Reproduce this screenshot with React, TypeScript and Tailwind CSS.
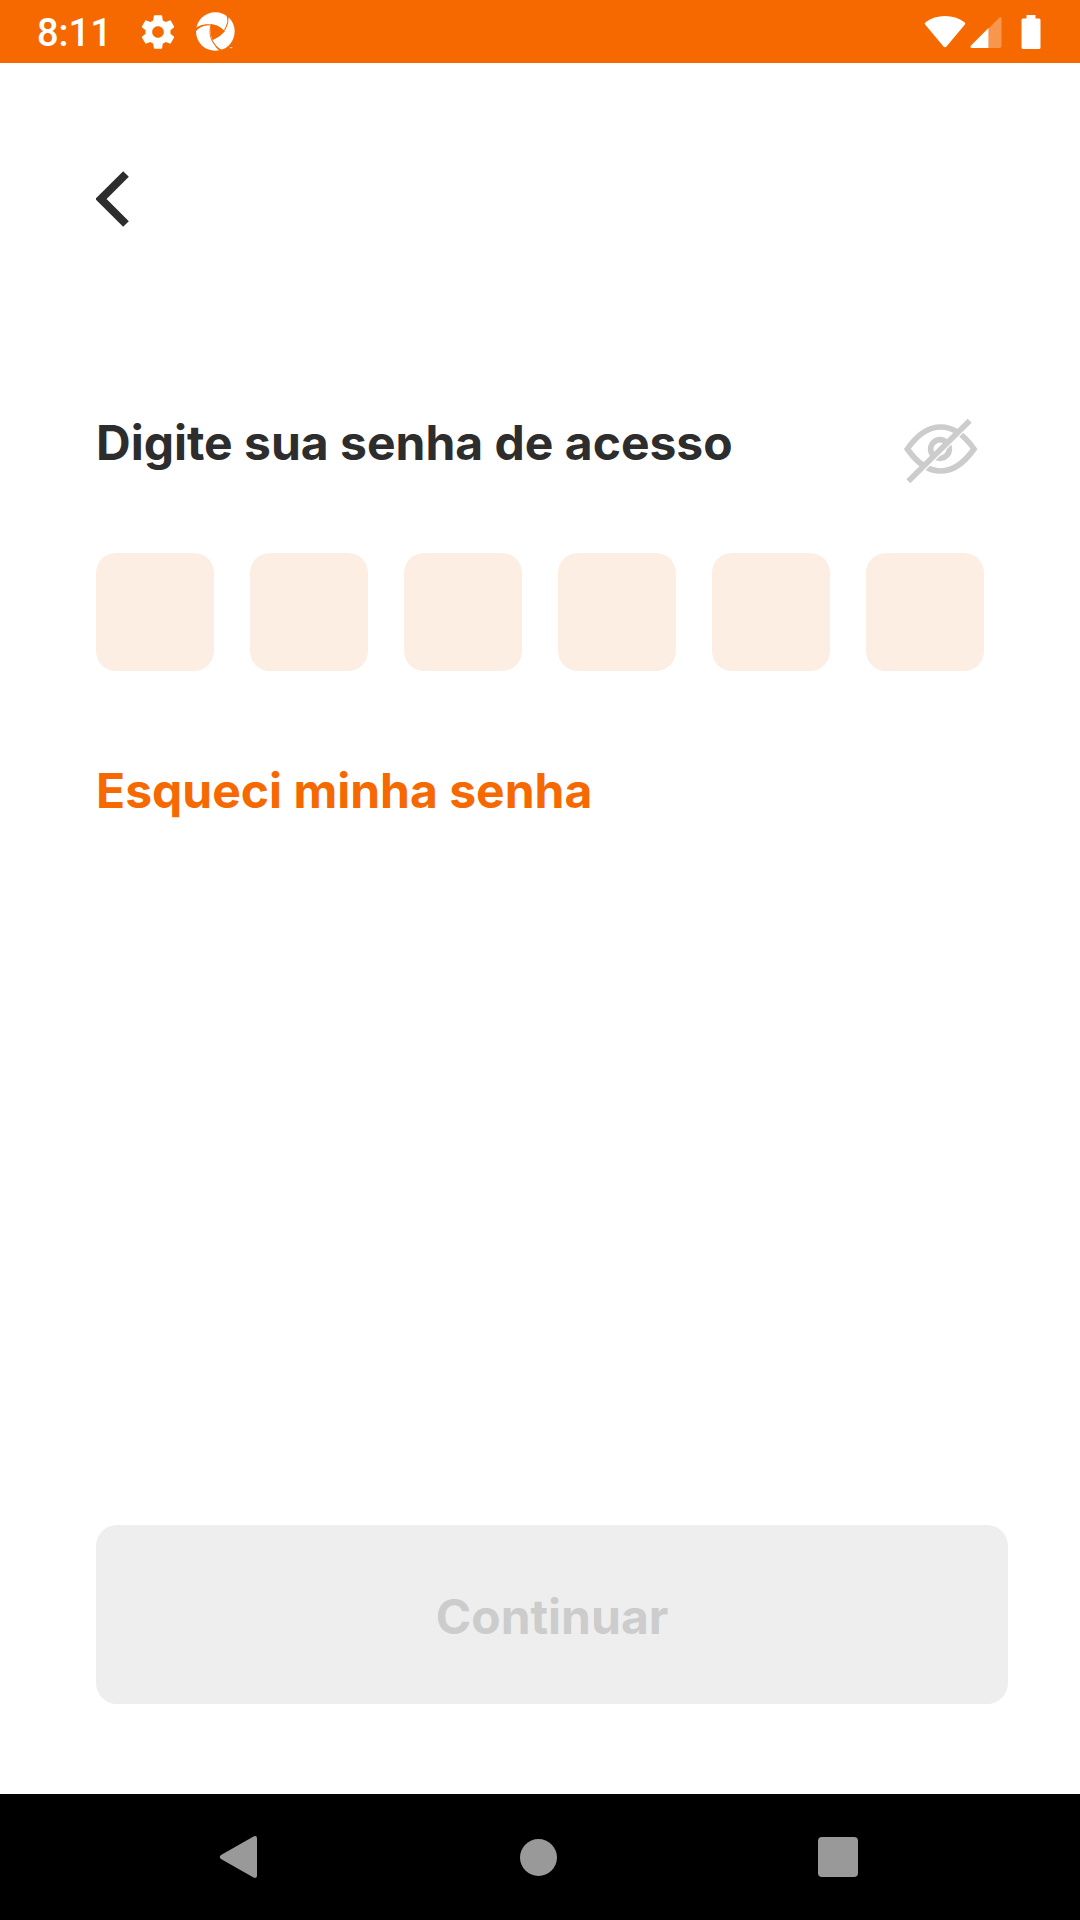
import { useState } from "react";

const digits = [1, 2, 3, 4, 5, 6];

function GearIcon() {
  return (
    <svg viewBox="0 0 24 24" className="size-10" fill="currentColor" aria-hidden="true">
      <path d="M19.43 12.98c.04-.32.07-.64.07-.98s-.03-.66-.07-.98l2.110-1.650c.19-.15.24-.42.12-.64l-2-3.460c-.12-.22-.39-.3-.61-.22l-2.490 1c-.52-.4-1.080-.73-1.690-.98l-.38-2.650C14.460 2.180 14.250 2 14 2h-4c-.25 0-.46.18-.49.42l-.38 2.650c-.61.25-1.170.59-1.690.98l-2.490-1c-.23-.09-.49 0-.61.22l-2 3.460c-.13.22-.07.49.12.64l2.110 1.650c-.04.32-.07.65-.07.98s.03.66.07.98l-2.110 1.650c-.19.15-.24.42-.12.64l2 3.460c.12.22.39.3.61.22l2.490-1c.52.4 1.080.73 1.690.98l.38 2.650c.03.24.24.42.49.42h4c.25 0 .46-.18.49-.42l.38-2.650c.61-.25 1.170-.59 1.690-.98l2.490 1c.23.09.49 0 .61-.22l2-3.460c.12-.22.07-.49-.12-.64l-2.110-1.650zM12 15.500c-1.930 0-3.500-1.570-3.500-3.500s1.570-3.500 3.500-3.500 3.500 1.570 3.500 3.500-1.570 3.500-3.500 3.500z" />
    </svg>
  );
}

function SwirlIcon() {
  return (
    <svg viewBox="0 0 117 117" className="size-[39px]" aria-hidden="true">
      <circle cx="58" cy="58.500" r="58" fill="#fff" />
      <g fill="none" stroke="#f66900" strokeWidth="3">
        <path d="M2 52C18 36 58 30 86 59" />
        <path d="M93 8C103 32 86 66 49 83" />
        <path d="M78 116C50 100 34 72 46 36" />
      </g>
      <path d="M0 47C12 38 30 35 46 37C26 38 10 46 0 58Z" fill="#f66900" />
      <path d="M90 8C97 22 96 40 85 59C92 42 94 26 98 14Z" fill="#f66900" />
      <path d="M80 117C66 108 56 98 49 83C54 100 62 110 73 117Z" fill="#f66900" />
      <path d="M46 37C62 38 76 46 85 59C76 69 64 78 49 83C43 68 42 52 46 37Z" fill="#f66900" />
      <path d="M101 107H109" stroke="#fff" strokeWidth="3" strokeOpacity="0.7" />
    </svg>
  );
}

function StatusBar() {
  return (
    <header className="flex h-[63px] items-center justify-between bg-[#f66900] pr-[39px] pl-[37px] text-white">
      <div className="flex items-center">
        <time className="pt-0.5 font-[Roboto,sans-serif] text-[38px] leading-[42px] font-medium">8:11</time>
        <span className="ml-[26px]">
          <GearIcon />
        </span>
        <span className="ml-[18px]">
          <SwirlIcon />
        </span>
      </div>
      <div className="flex items-center">
        <svg viewBox="0 0 42 34" className="h-[34px] w-[42px]" aria-hidden="true">
          <path
            d="M1.300 9.800Q0 8.500 1.500 7.300Q10 1 21 1T40.500 7.300Q42 8.500 40.700 9.800L22.500 31.500Q21 33 19.500 31.500Z"
            fill="currentColor"
          />
        </svg>
        <svg viewBox="0 0 32 34" className="ml-1 h-[34px] w-8" aria-hidden="true">
          <path d="M18.500 13.500L29.500 2.500Q31.500 1.500 31.500 3.500V31Q31.500 33 29.500 33H18.500Z" fill="#fff" fillOpacity="0.3" />
          <path d="M18.500 13V33H2Q-0.500 33 1 30.500Z" fill="currentColor" />
        </svg>
        <svg viewBox="0 0 20 34" className="ml-[19px] h-[34px] w-5" aria-hidden="true">
          <path d="M5.500 0H14.500V3.500H18Q19.500 3.500 19.500 5V32.500Q19.500 34 18 34H2Q0.500 34 0.500 32.500V5Q0.500 3.500 2 3.500H5.500Z" fill="currentColor" />
        </svg>
      </div>
    </header>
  );
}

function EyeOffIcon() {
  return (
    <svg viewBox="70 54 228 198" className="h-[66px] w-[76px]" fill="none" stroke="#ccc" strokeWidth="17" aria-hidden="true">
      <path d="M83 147C112 105 148 81 183 81S254 105 283 147C254 188 218 213 183 213S112 188 83 147Z" />
      <circle cx="181" cy="147" r="28" />
      <path d="M92 250L276 68" stroke="#fff" strokeWidth="8" />
      <path d="M86 244L270 62" />
    </svg>
  );
}

function NavBar() {
  return (
    <nav aria-label="Sistema" className="grid h-[126px] grid-cols-3 bg-black pr-[92px] pl-[90px] text-[#999]">
      <button type="button" aria-label="Voltar" className="flex items-center justify-center">
        <svg viewBox="0 0 42 44" className="h-11 w-[42px]" aria-hidden="true">
          <path d="M2 20L34.500 1.500Q38 0 38 3.500V40.500Q38 44 34.500 42.500L2 24Q-0.500 22 2 20Z" fill="currentColor" />
        </svg>
      </button>
      <button type="button" aria-label="Início" className="flex items-center justify-center">
        <span className="size-[37px] rounded-full bg-[#999]" />
      </button>
      <button type="button" aria-label="Recentes" className="flex items-center justify-center">
        <span className="size-10 rounded-[4px] bg-[#999]" />
      </button>
    </nav>
  );
}

export default function App() {
  const [visible, setVisible] = useState(false);
  return (
    <div className="flex min-h-screen flex-col bg-white font-[Inter,sans-serif] text-[#2d2d2d]">
      <StatusBar />
      <main className="flex grow flex-col pt-[108px] pr-[72px] pb-[90px] pl-24">
        <button type="button" aria-label="Voltar" className="w-fit">
          <svg viewBox="0 0 34 56" className="h-14 w-[34px]" aria-hidden="true">
            <path d="M30 3L5 28L30 53" fill="none" stroke="currentColor" strokeWidth="8" />
          </svg>
        </button>
        <form className="flex grow flex-col" onSubmit={(e) => e.preventDefault()}>
          <div className="mt-[188px] flex items-start justify-between pr-[29px]">
            <h1 className="text-[48px] leading-[56px] font-bold">Digite sua senha de acesso</h1>
            <button
              type="button"
              aria-label="Mostrar senha"
              aria-pressed={visible}
              className="mt-[3px]"
              onClick={() => setVisible(!visible)}
            >
              <EyeOffIcon />
            </button>
          </div>
          <div className="mt-[69px] grid grid-cols-6 gap-9 pr-6">
            {digits.map((n) => (
              <input
                key={n}
                type={visible ? "text" : "password"}
                inputMode="numeric"
                maxLength={1}
                aria-label={`Dígito ${n}`}
                className="aspect-square w-full min-w-0 rounded-[20px] bg-[#fdeee3] text-center text-[48px] font-bold"
              />
            ))}
          </div>
          <a href="#senha" className="mt-[92px] w-fit text-[48px] leading-[56px] font-bold text-[#f66900]">
            Esqueci minha senha
          </a>
          <button
            type="submit"
            disabled
            className="mt-auto w-full rounded-[21px] bg-[#eee] pt-16 pb-[59px] text-[48px] leading-[56px] font-bold text-[#ccc]"
          >
            Continuar
          </button>
        </form>
      </main>
      <NavBar />
    </div>
  );
}
